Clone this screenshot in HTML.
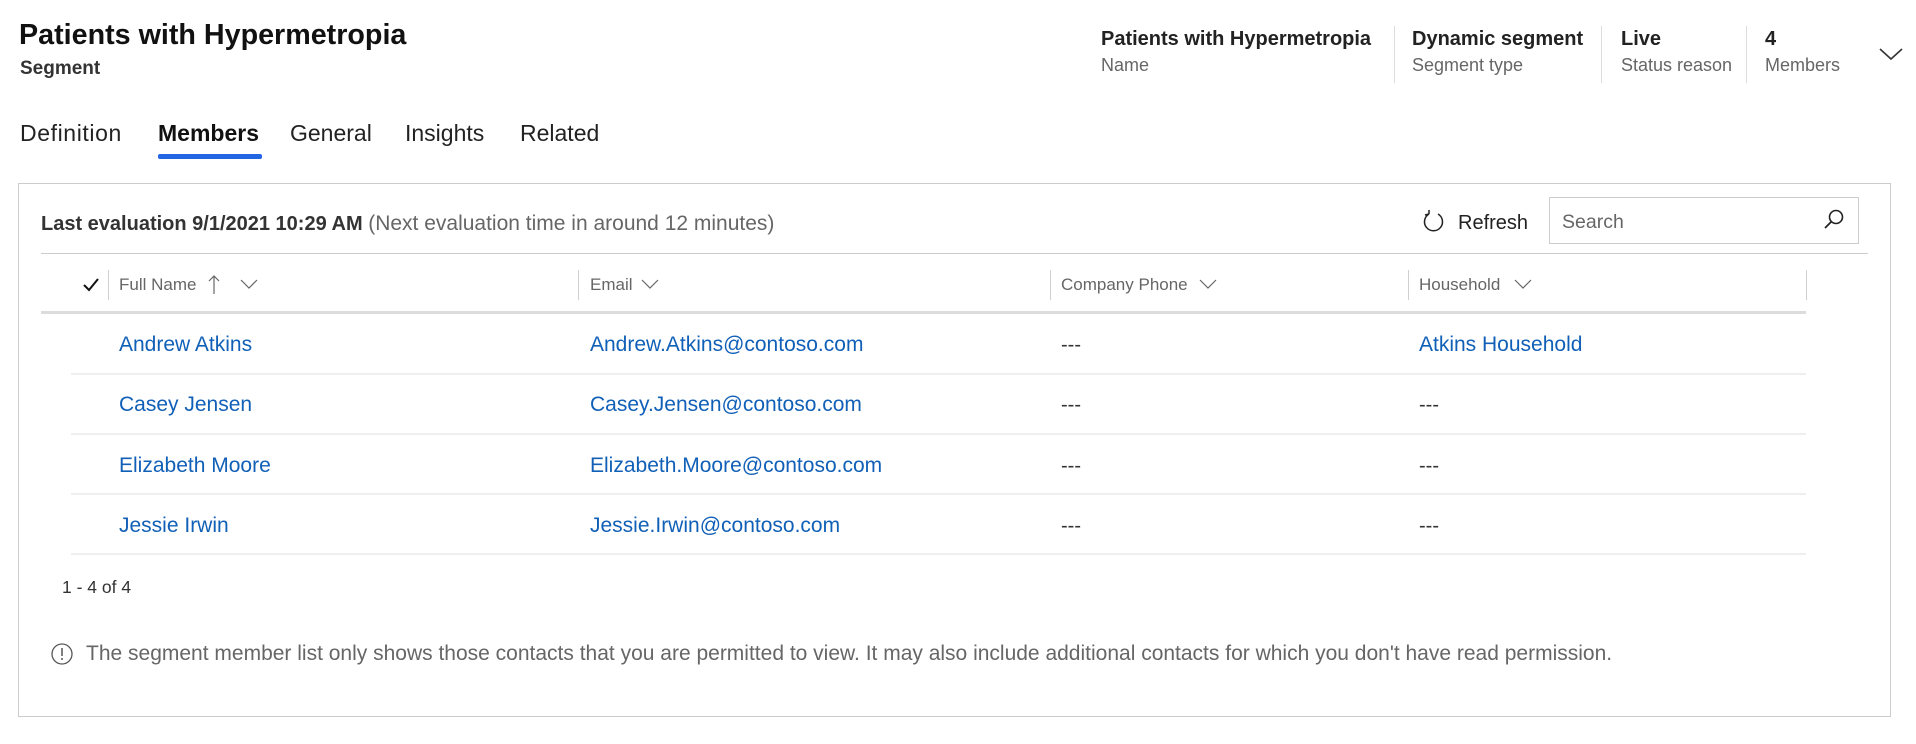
<!DOCTYPE html>
<html><head><meta charset="utf-8"><style>
*{margin:0;padding:0;box-sizing:border-box}
body{width:1916px;height:744px;background:#fff;font-family:"Liberation Sans",sans-serif;position:relative;overflow:hidden;color:#222}
.a{position:absolute;white-space:nowrap}
.b{font-weight:bold}
.g{color:#666}
.lk{color:#1160b7;font-size:21px}
.d{font-size:20px;color:#333}
.sep{position:absolute;width:1px;background:#ddd}
.hsep{position:absolute;width:1px;background:#d0d0d0;top:270px;height:30px}
.rl{position:absolute;left:71px;width:1735px;height:2px;background:#efefef}
.hd{font-size:17px;color:#666;top:275px}
</style></head><body>
<div class="a b" style="left:19px;top:19px;font-size:28.7px;color:#111">Patients with Hypermetropia</div>
<div class="a b" style="left:20px;top:58px;font-size:19px;color:#333">Segment</div>

<div class="a b" style="left:1101px;top:28px;font-size:20px">Patients with Hypermetropia</div>
<div class="a g" style="left:1101px;top:55px;font-size:18px">Name</div>
<div class="sep" style="left:1394px;top:26px;height:57px"></div>
<div class="a b" style="left:1412px;top:28px;font-size:20px">Dynamic segment</div>
<div class="a g" style="left:1412px;top:55px;font-size:18px">Segment type</div>
<div class="sep" style="left:1601px;top:26px;height:57px"></div>
<div class="a b" style="left:1621px;top:28px;font-size:20px">Live</div>
<div class="a g" style="left:1621px;top:55px;font-size:18px">Status reason</div>
<div class="sep" style="left:1746px;top:26px;height:57px"></div>
<div class="a b" style="left:1765px;top:28px;font-size:20px">4</div>
<div class="a g" style="left:1765px;top:55px;font-size:18px">Members</div>
<svg class="a" style="left:1878px;top:46px" width="26" height="16"><path d="M2 3 L13 13 L24 3" fill="none" stroke="#333" stroke-width="1.6"/></svg>

<div class="a" style="left:20px;top:120px;font-size:23px;color:#222;letter-spacing:0.6px">Definition</div>
<div class="a b" style="left:158px;top:120px;font-size:23px;color:#111">Members</div>
<div class="a" style="left:290px;top:120px;font-size:23px;color:#222">General</div>
<div class="a" style="left:405px;top:120px;font-size:23px;color:#222">Insights</div>
<div class="a" style="left:520px;top:120px;font-size:23px;color:#222">Related</div>
<div class="a" style="left:158px;top:154px;width:104px;height:5px;background:#2266e3;border-radius:2px"></div>

<div class="a" style="left:18px;top:183px;width:1873px;height:534px;border:1px solid #ccc"></div>
<div class="a" style="left:41px;top:212px;font-size:20px;color:#333"><b>Last evaluation 9/1/2021 10:29 AM</b> <span style="color:#666;font-size:21px">(Next evaluation time in around 12 minutes)</span></div>
<svg class="a" style="left:1421px;top:209px" width="26" height="26"><path d="M8 5 A9 9 0 1 0 17 5" fill="none" stroke="#222" stroke-width="1.5"/><path d="M8 5 L8 1 M8 5 L4 6" fill="none" stroke="#222" stroke-width="1.5"/></svg>
<div class="a" style="left:1458px;top:212px;font-size:20px;color:#222">Refresh</div>
<div class="a" style="left:1549px;top:197px;width:310px;height:47px;border:1px solid #ccc"></div>
<div class="a" style="left:1562px;top:211px;font-size:19.5px;color:#666">Search</div>
<svg class="a" style="left:1822px;top:208px" width="24" height="24"><circle cx="14" cy="9" r="6.5" fill="none" stroke="#222" stroke-width="1.6"/><path d="M9.5 13.5 L3 20" stroke="#222" stroke-width="1.8"/></svg>
<div class="a" style="left:41px;top:253px;width:1827px;height:1px;background:#ccc"></div>

<svg class="a" style="left:82px;top:277px" width="18" height="16"><path d="M2 8 L7 13 L16 2" fill="none" stroke="#111" stroke-width="2"/></svg>
<div class="hsep" style="left:108px"></div>
<div class="a hd" style="left:119px">Full Name</div>
<svg class="a" style="left:207px;top:273px" width="14" height="22"><path d="M7 21 V3 M2 8 L7 3 L12 8" fill="none" stroke="#666" stroke-width="1.2"/></svg>
<svg class="a" style="left:240px;top:278px" width="18" height="12"><path d="M1 2 L9 10 L17 2" fill="none" stroke="#666" stroke-width="1.2"/></svg>
<div class="hsep" style="left:578px"></div>
<div class="a hd" style="left:590px">Email</div>
<svg class="a" style="left:641px;top:278px" width="18" height="12"><path d="M1 2 L9 10 L17 2" fill="none" stroke="#666" stroke-width="1.2"/></svg>
<div class="hsep" style="left:1050px"></div>
<div class="a hd" style="left:1061px">Company Phone</div>
<svg class="a" style="left:1199px;top:278px" width="18" height="12"><path d="M1 2 L9 10 L17 2" fill="none" stroke="#666" stroke-width="1.2"/></svg>
<div class="hsep" style="left:1408px"></div>
<div class="a hd" style="left:1419px">Household</div>
<svg class="a" style="left:1514px;top:278px" width="18" height="12"><path d="M1 2 L9 10 L17 2" fill="none" stroke="#666" stroke-width="1.2"/></svg>
<div class="hsep" style="left:1806px"></div>
<div class="a" style="left:41px;top:311px;width:1765px;height:3px;background:#dcdcdc"></div>

<div class="a lk" style="left:119px;top:333px">Andrew Atkins</div>
<div class="a lk" style="left:590px;top:333px">Andrew.Atkins@contoso.com</div>
<div class="a d" style="left:1061px;top:334px">---</div>
<div class="a lk" style="left:1419px;top:333px">Atkins Household</div>
<div class="rl" style="top:373px"></div>
<div class="a lk" style="left:119px;top:393px">Casey Jensen</div>
<div class="a lk" style="left:590px;top:393px">Casey.Jensen@contoso.com</div>
<div class="a d" style="left:1061px;top:394px">---</div>
<div class="a d" style="left:1419px;top:394px">---</div>
<div class="rl" style="top:433px"></div>
<div class="a lk" style="left:119px;top:454px">Elizabeth Moore</div>
<div class="a lk" style="left:590px;top:454px">Elizabeth.Moore@contoso.com</div>
<div class="a d" style="left:1061px;top:455px">---</div>
<div class="a d" style="left:1419px;top:455px">---</div>
<div class="rl" style="top:493px"></div>
<div class="a lk" style="left:119px;top:514px">Jessie Irwin</div>
<div class="a lk" style="left:590px;top:514px">Jessie.Irwin@contoso.com</div>
<div class="a d" style="left:1061px;top:515px">---</div>
<div class="a d" style="left:1419px;top:515px">---</div>
<div class="rl" style="top:553px"></div>

<div class="a" style="left:62px;top:577px;font-size:17.5px;color:#333">1 - 4 of 4</div>
<svg class="a" style="left:50px;top:642px" width="24" height="24"><circle cx="12" cy="12" r="10" fill="none" stroke="#555" stroke-width="1.3"/><path d="M12 6 V14" stroke="#555" stroke-width="1.5"/><circle cx="12" cy="17" r="1" fill="#555"/></svg>
<div class="a" style="left:86px;top:642px;font-size:21px;color:#666">The segment member list only shows those contacts that you are permitted to view. It may also include additional contacts for which you don't have read permission.</div>
</body></html>
